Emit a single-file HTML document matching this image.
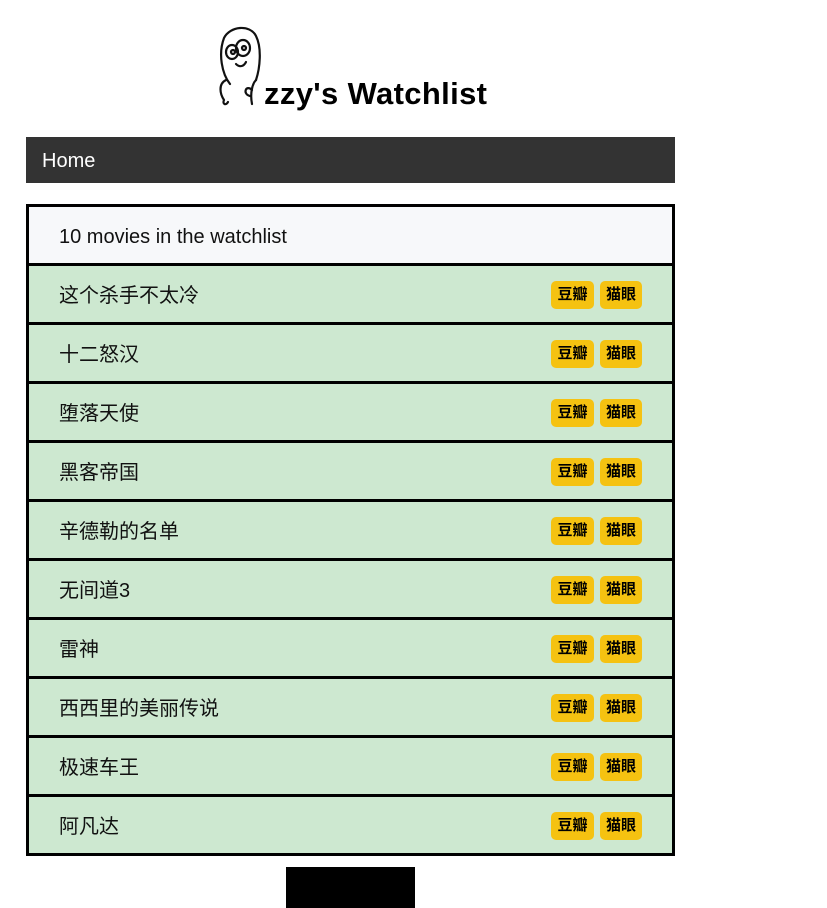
<!DOCTYPE html>
<html><head><meta charset="utf-8"><style>
body{margin:0;background:#fff;font-family:"Liberation Sans","Noto Sans CJK SC",sans-serif;width:827px;height:908px;overflow:hidden;position:relative}
h1{position:absolute;left:264px;top:72px;margin:0;font-size:31px;font-weight:bold;line-height:44px;color:#000;letter-spacing:0.35px}
.nav{position:absolute;left:26px;top:137px;width:649px;height:46px;background:#333;color:#fff;font-size:20px;line-height:48px}
.nav span{padding-left:16px}
.list{position:absolute;left:26px;top:204px;width:643px;border:3px solid #000}
.row{height:56px;border-bottom:3px solid #000;background:#cde8d0;position:relative;font-size:20px;line-height:60px;padding-left:30px;color:#111}
.row:last-child{border-bottom:none}
.row.h{background:#f7f8fa}
.b{position:absolute;top:15px;height:28px;line-height:28px;width:43px;text-align:center;background:#f5c211;border-radius:5px;font-size:15px;font-weight:bold;color:#000}
.b1{left:522px}.b2{left:571px;width:42px}
.foot{position:absolute;left:286px;top:867px;width:129px;height:41px;background:#000}
</style></head><body>
<svg style="position:absolute;left:216px;top:24px" width="48" height="84" viewBox="0 0 48 84" fill="none" stroke="#111" stroke-width="2.2" stroke-linecap="round">
<path d="M14 60 C6 50 2 30 8 14 C14 2 34 0 40 12 C46 24 44 44 40 56"/>
<path d="M40 56 C36 60 34 70 36 80"/>
<path d="M10 56 C2 60 4 70 8 76 M8 76 C6 80 10 82 12 78"/>
<ellipse cx="16" cy="28" rx="6" ry="7"/><ellipse cx="27" cy="24" rx="7" ry="8"/>
<circle cx="17" cy="28" r="2"/><circle cx="28" cy="24" r="2"/>
<path d="M20 40 C24 44 28 42 30 38"/>
<path d="M36 66 C30 60 26 70 34 72"/>
</svg>
<h1>zzy's Watchlist</h1>
<div class="nav"><span>Home</span></div>
<div class="list">
<div class="row h">10 movies in the watchlist</div>
<div class="row">这个杀手不太冷<span class="b b1">豆瓣</span><span class="b b2">猫眼</span></div>
<div class="row">十二怒汉<span class="b b1">豆瓣</span><span class="b b2">猫眼</span></div>
<div class="row">堕落天使<span class="b b1">豆瓣</span><span class="b b2">猫眼</span></div>
<div class="row">黑客帝国<span class="b b1">豆瓣</span><span class="b b2">猫眼</span></div>
<div class="row">辛德勒的名单<span class="b b1">豆瓣</span><span class="b b2">猫眼</span></div>
<div class="row">无间道3<span class="b b1">豆瓣</span><span class="b b2">猫眼</span></div>
<div class="row">雷神<span class="b b1">豆瓣</span><span class="b b2">猫眼</span></div>
<div class="row">西西里的美丽传说<span class="b b1">豆瓣</span><span class="b b2">猫眼</span></div>
<div class="row">极速车王<span class="b b1">豆瓣</span><span class="b b2">猫眼</span></div>
<div class="row">阿凡达<span class="b b1">豆瓣</span><span class="b b2">猫眼</span></div>
</div>
<div class="foot"></div>
</body></html>
